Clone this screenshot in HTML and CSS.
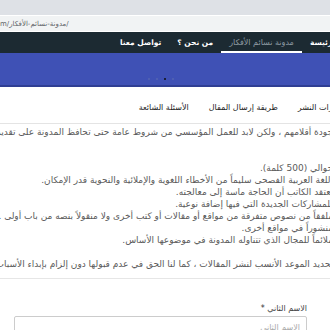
FILE: index.html
```html
<!DOCTYPE html>
<html>
<head>
    <meta charset="utf-8"/>
    <title>شروط النشر</title>
    <link rel="stylesheet" href="styles.css">
</head>
<body>
    <div class="chrome">
        <div class="tabstrip"></div>
        <div class="urlbar"><span class="url">m/مدونة-نسائم-الأفكار/</span></div>
    </div>
    <div class="page" dir="rtl">
        <nav class="topnav">
            <a href="#">الرئيسة</a>
            <a href="#" class="active">مدونة نسائم الأفكار</a>
            <a href="#">من نحن ؟</a>
            <a href="#">تواصل معنا</a>
        </nav>
        <header class="banner">
            <div class="dots">
                <span></span><span class="on"></span><span></span><span></span>
            </div>
        </header>
        <ul class="tabs">
            <li class="current">شروط النشر</li>
            <li>مميزات النشر</li>
            <li>طريقة إرسال المقال</li>
            <li>الأسئلة الشائعة</li>
        </ul>
        <section class="terms">
            <p class="intro">جودة أقلامهم ، ولكن لابد للعمل المؤسسي من شروط عامة حتى تحافظ المدونة على تقديم مستوى مفيد للقراء ، وهي كالتالي :</p>
            <ol>
                <li>حوالي (500 كلمة).</li>
                <li>اللغة العربية الفصحى سليماً من الأخطاء اللغوية والإملائية والنحوية قدر الإمكان.</li>
                <li>يعتقد الكاتب أن الحاجة ماسة إلى معالجته.</li>
                <li>للمشاركات الجديدة التي فيها إضافة نوعية.</li>
                <li>ملفقاً من نصوص متفرقة من مواقع أو مقالات أو كتب أخرى ولا منقولاً بنصه من باب أولى .</li>
                <li>منشوراً في مواقع أخرى.</li>
                <li>ملائماً للمجال الذي تتناوله المدونة في موضوعها الأساس.</li>
            </ol>
            <p class="note">تحديد الموعد الأنسب لنشر المقالات ، كما لنا الحق في عدم قبولها دون إلزام بإبداء الأسباب.</p>
        </section>
        <hr>
        <form class="send">
            <label for="last">الاسم الثاني <b>*</b></label>
            <input type="text" id="last" placeholder="الاسم الثاني">
        </form>
    </div>
</body>
</html>
```

FILE: styles.css
```css
html, body {
    margin: 0;
    padding: 0;
    overflow: hidden;
}
body {
    width: 330px;
    height: 330px;
    font-family: "DejaVu Sans", "Noto Sans", sans-serif;
    background: #fff;
}
.chrome {
    width: 330px;
}
.tabstrip {
    height: 15px;
    background: #dee1e6;
    border-bottom: 1px solid #fff;
}
.urlbar {
    height: 15px;
    background: #f1f3f4;
    border-bottom: 1px solid #fff;
    display: flex;
    align-items: center;
    direction: ltr;
}
.url {
    font-size: 7px;
    color: #5f6368;
    white-space: nowrap;
}
.page {
    width: 450px;
}
.topnav {
    height: 21px;
    background: #1c2a32;
    display: flex;
    align-items: center;
    padding-right: 104px;
}
.topnav a {
    color: #fff;
    font-size: 7.5px;
    font-weight: bold;
    text-decoration: none;
    white-space: nowrap;
    line-height: 21px;
    padding: 0 8px;
    position: relative;
}
.topnav a.active {
    color: #8e9ba3;
    font-weight: normal;
    font-size: 8px;
}
.topnav a.active::after {
    content: "";
    position: absolute;
    left: 0;
    right: 0;
    bottom: 0;
    height: 2px;
    background: #fff;
}
.banner {
    height: 32px;
    background: #3f51b5;
    border-bottom: 2px solid #2f3e93;
    display: flex;
    align-items: flex-end;
}
.dots {
    display: flex;
    gap: 6px;
    margin: 0 276px 5px 0;
}
.dots span {
    width: 2px;
    height: 2px;
    border-radius: 50%;
    background: #5565b3;
}
.dots span.on {
    background: #111;
}
.tabs {
    list-style: none;
    margin: 16px 0 0;
    padding: 0 42px 0 0;
    display: flex;
    gap: 20px;
    border-bottom: 1px solid #e4e4e4;
    height: 20px;
}
.tabs li {
    font-size: 8px;
    color: #222;
    white-space: nowrap;
}
.terms {
    font-size: 9px;
    line-height: 12px;
    color: #5a5a5a;
    padding-right: 117px;
}
.terms p, .terms ol {
    margin: 0;
    padding: 0;
    list-style: none;
    white-space: nowrap;
}
.terms .intro {
    margin: 2px 0 24px;
}
.terms .note {
    margin-top: 12px;
}
hr {
    border: none;
    border-top: 1px solid #e6e6e6;
    margin: 8px 0 0;
}
.send {
    width: 293px;
    margin: 25px 143px 0 0;
    display: flex;
    flex-direction: column;
    gap: 3px;
}
.send label {
    font-size: 8px;
    color: #444;
}
.send label b {
    color: #333;
    font-weight: normal;
}
.send input {
    height: 20px;
    border: 1px solid #ccc;
    border-radius: 2px;
    font-family: inherit;
    font-size: 8px;
    padding: 0 6px;
}
.send input::placeholder {
    color: #aaa;
}
```
